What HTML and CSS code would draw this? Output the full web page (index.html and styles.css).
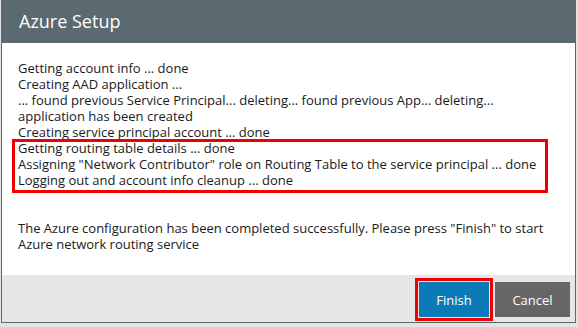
FILE: index.html
```html
<!DOCTYPE html>
<html>
<head>
<meta charset="utf-8">
<link rel="stylesheet" href="styles.css">
</head>
<body>
<div class="dialog">
  <div class="header">Azure Setup</div>
  <div class="content">
    <div class="log">
      <div>Getting account info ... done</div>
      <div>Creating AAD application ...</div>
      <div>... found previous Service Principal... deleting... found previous App... deleting...</div>
      <div>application has been created</div>
      <div>Creating service principal account ... done</div>
      <div class="highlight">
        <div>Getting routing table details ... done</div>
        <div>Assigning "Network Contributor" role on Routing Table to the service principal ... done</div>
        <div>Logging out and account info cleanup ... done</div>
      </div>
    </div>
    <p class="summary">The Azure configuration has been completed successfully. Please press "Finish" to start<br>Azure network routing service</p>
  </div>
  <div class="footer">
    <button class="btn btn-primary">Finish</button>
    <button class="btn btn-secondary">Cancel</button>
  </div>
</div>
</body>
</html>
```

FILE: styles.css
```css
html, body {
  margin: 0;
  padding: 0;
}
body {
  background: #e3e3e3;
  font-family: "Open Sans", "Noto Sans", sans-serif;
  width: 578px;
  height: 327px;
  overflow: hidden;
}
.dialog {
  margin-left: 1px;
  width: 575px;
  box-sizing: border-box;
  border: 1px solid #5b676c;
  border-top: none;
  background: #fff;
}
.header {
  height: 43px;
  margin: 0 -1px;
  background: #5b6a71;
  color: #fff;
  font-size: 18px;
  line-height: 43px;
  padding-left: 18px;
}
.content {
  height: 232px;
  padding: 17px 16px 0 16px;
  box-sizing: border-box;
  font-size: 13px;
  line-height: 16px;
  color: #1a1a1a;
  white-space: nowrap;
}
.highlight {
  position: relative;
}
.highlight::after {
  content: "";
  position: absolute;
  top: -1px;
  left: -6px;
  width: 536px;
  height: 54px;
  border: 3px solid #ee0000;
  box-sizing: border-box;
}
.summary {
  margin: 32px 0 0 0;
  line-height: 16px;
}
.footer {
  height: 47px;
  background: #e5e6e7;
  display: flex;
  justify-content: flex-end;
  align-items: flex-start;
  gap: 6px;
  padding: 7px 5px 0 0;
  box-sizing: border-box;
}
.btn {
  height: 35px;
  border: none;
  margin: 0;
  padding: 0;
  font-family: "Open Sans", "Noto Sans", sans-serif;
  font-size: 13px;
  color: #fff;
}
.btn-primary {
  width: 70px;
  background: #0a7bb6;
  outline: 3px solid #ee0000;
  outline-offset: 1px;
}
.btn-secondary {
  width: 75px;
  background: #666666;
}
```
